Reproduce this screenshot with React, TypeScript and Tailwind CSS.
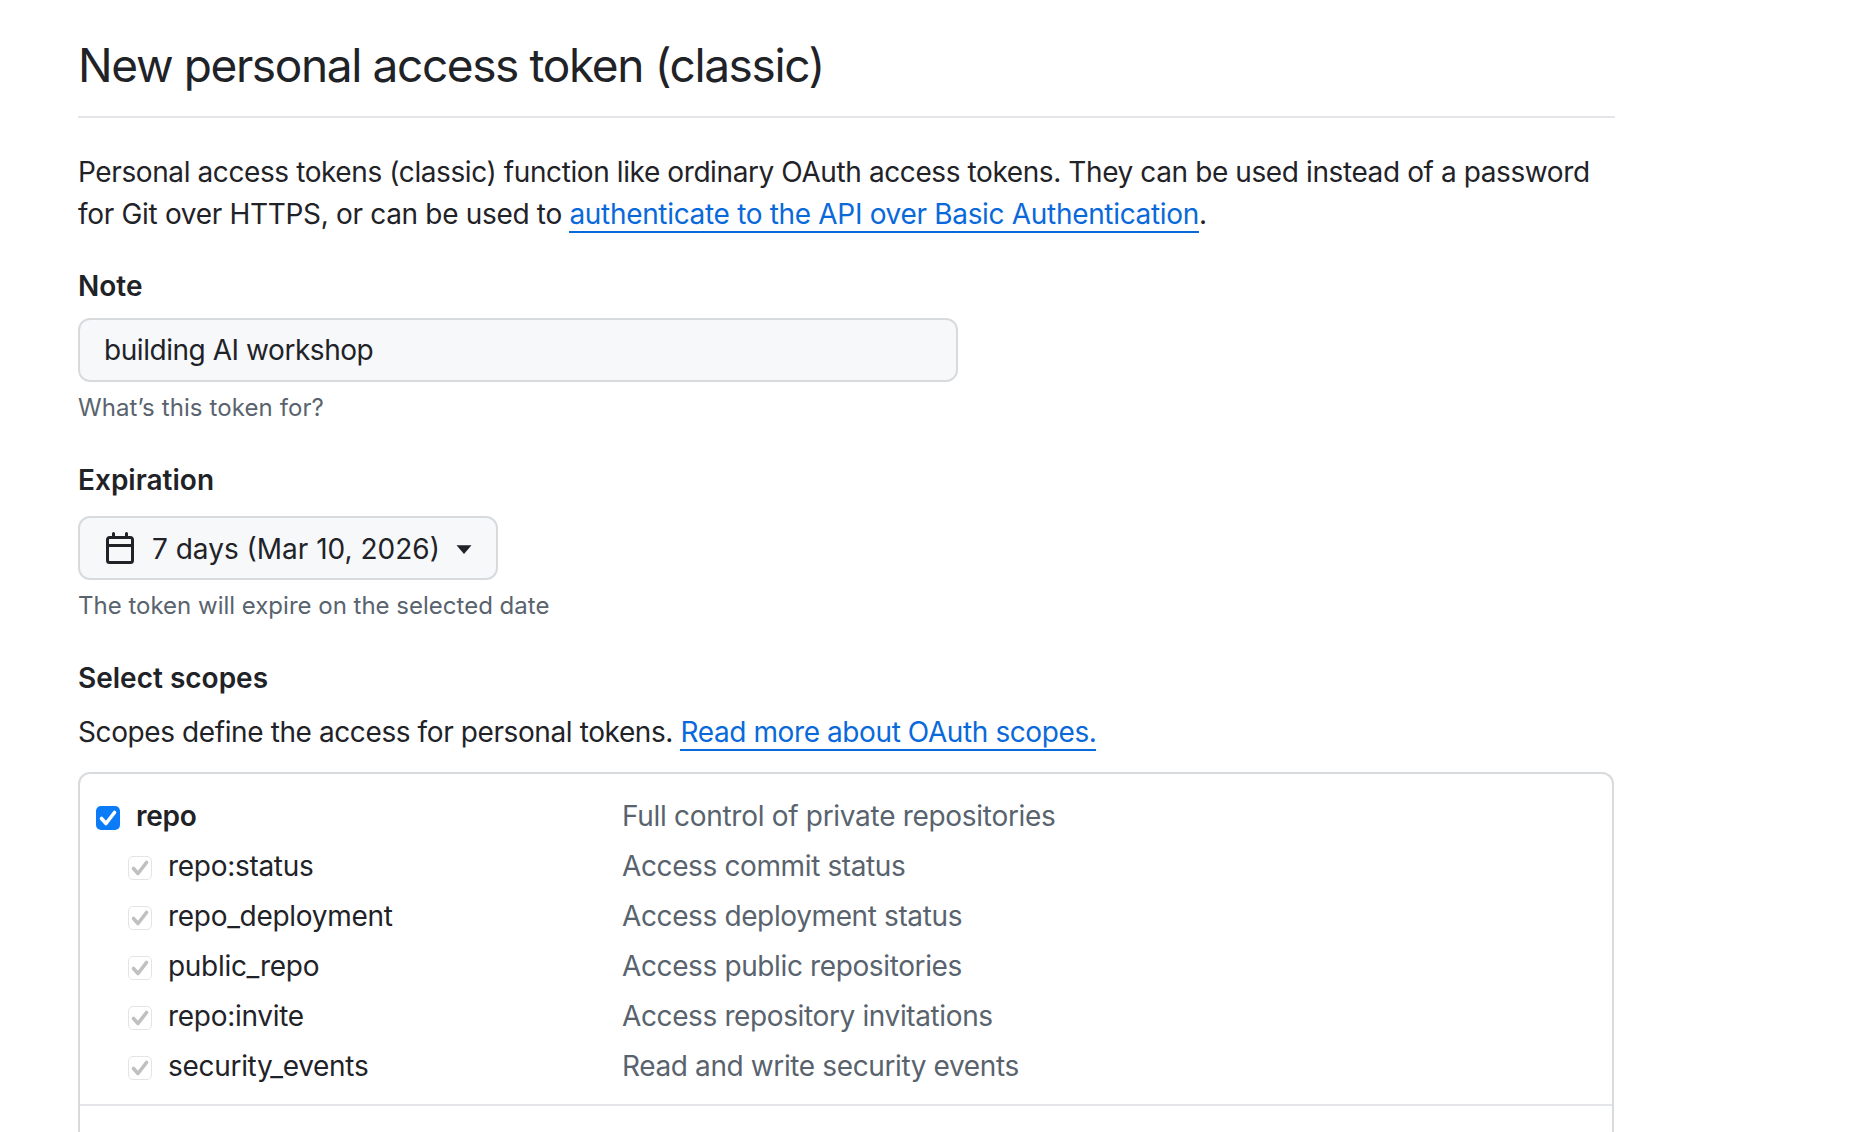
function CheckIcon({ color }: { color: string }) {
  return (
    <svg viewBox="0 0 24 24" className="h-6 w-6 shrink-0" fill="none">
      <path d="M5.5 12.5 L10 17.5 L18.5 6.5" stroke={color} strokeWidth="3.6" strokeLinecap="round" strokeLinejoin="round" />
    </svg>
  );
}

const rows = [
  ["repo:status", "Access commit status"],
  ["repo_deployment", "Access deployment status"],
  ["public_repo", "Access public repositories"],
  ["repo:invite", "Access repository invitations"],
  ["security_events", "Read and write security events"],
];

export default function App() {
  return (
    <div className="h-[1132px] overflow-hidden bg-white pl-[78px] font-['Inter',sans-serif] text-[#1f2328]">
      <div className="w-[1537px]">
        <div className="flex h-[118px] items-start border-b-2 border-[#e3e5e8] pt-[37px]">
          <h1 className="text-[46px] leading-[56px] font-normal tracking-[-1.38px]">New personal access token (classic)</h1>
        </div>

        <p className="mt-[33px] text-[28px] leading-[42px] tracking-[-0.32px] whitespace-nowrap">
          <span className="tracking-[-0.4px]">Personal access tokens (classic) function like ordinary OAuth access tokens. They can be used instead of a password</span>
          <br />
          for Git over HTTPS, or can be used to{" "}
          <a className="border-b-2 border-[#0969da] text-[#0969da]">authenticate to the API over Basic Authentication</a>.
        </p>

        <div className="mt-[30px] text-[28px] leading-[42px] font-semibold">Note</div>
        <div className="mt-[11px] flex h-[64px] w-[880px] items-center rounded-xl border-2 border-[#d8dbde] bg-[#f6f8fa] px-[24px] text-[28px] tracking-[-0.45px]">
          building AI workshop
        </div>
        <div className="mt-[8px] text-[24px] leading-[36px] tracking-[0.1px] text-[#59636e]">What’s this token for?</div>

        <div className="mt-[33px] text-[28px] leading-[42px] font-semibold">Expiration</div>
        <div className="mt-[15px] flex h-[64px] w-[420px] items-center rounded-xl border-2 border-[#d8dbde] bg-[#f6f8fa] pl-[24px] text-[28px]">
          <svg viewBox="0 0 16 16" className="h-8 w-8 text-[#1f2328]" fill="currentColor">
            <path d="M4.75 0a.75.75 0 0 1 .75.75V2h5V.75a.75.75 0 0 1 1.5 0V2h1.25c.966 0 1.75.784 1.75 1.75v10.5A1.75 1.75 0 0 1 13.25 16H2.75A1.75 1.75 0 0 1 1 14.25V3.75C1 2.784 1.784 2 2.75 2H4V.75A.75.75 0 0 1 4.75 0ZM2.5 7.5v6.75c0 .138.112.25.25.25h10.5a.25.25 0 0 0 .25-.25V7.5Zm10.75-4H2.75a.25.25 0 0 0-.25.25V6h11V3.75a.25.25 0 0 0-.25-.25Z" />
          </svg>
          <span className="mt-[2px] ml-[16px]">7 days (Mar 10, 2026)</span>
          <svg viewBox="0 0 16 16" className="mt-[2px] ml-[14px] h-5 w-5 text-[#1f2328]" fill="currentColor">
            <path d="M2 5h12L8 12z" />
          </svg>
        </div>
        <div className="mt-[8px] text-[24px] leading-[36px] text-[#59636e]">The token will expire on the selected date</div>

        <div className="mt-[33px] text-[28px] leading-[42px] font-semibold">Select scopes</div>
        <p className="mt-[12px] text-[28px] leading-[42px] tracking-[-0.4px]">
          Scopes define the access for personal tokens.{" "}
          <a className="border-b-2 border-[#0969da] text-[#0969da]">Read more about OAuth scopes.</a>
        </p>

        <div className="mt-[19px] mr-[1px] rounded-t-xl border-x-2 border-t-2 border-[#d8dbde] pb-[300px]">
          <div className="border-b-2 border-[#e3e5e8] pt-[17px] pb-[13px]">
            <div className="flex h-[50px] items-center pl-[16px] text-[28px] tracking-[-0.3px]">
              <div className="mt-[3px] flex h-6 w-6 items-center justify-center rounded-[5px] bg-[#0b7bf8]">
                <CheckIcon color="#ffffff" />
              </div>
              <span className="ml-[16px] w-[486px] font-semibold">repo</span>
              <span className="text-[#59636e]">Full control of private repositories</span>
            </div>
            {rows.map(([name, desc]) => (
              <div key={name} className="flex h-[50px] items-center pl-[48px] text-[28px] tracking-[-0.3px]">
                <div className="mt-[3px] flex h-6 w-6 items-center justify-center rounded-[5px] border border-[#e4e4e4] bg-white">
                  <CheckIcon color="#c0c0c0" />
                </div>
                <span className="ml-[16px] w-[454px]">{name}</span>
                <span className="tracking-[-0.38px] text-[#59636e]">{desc}</span>
              </div>
            ))}
          </div>
        </div>
      </div>
    </div>
  );
}
